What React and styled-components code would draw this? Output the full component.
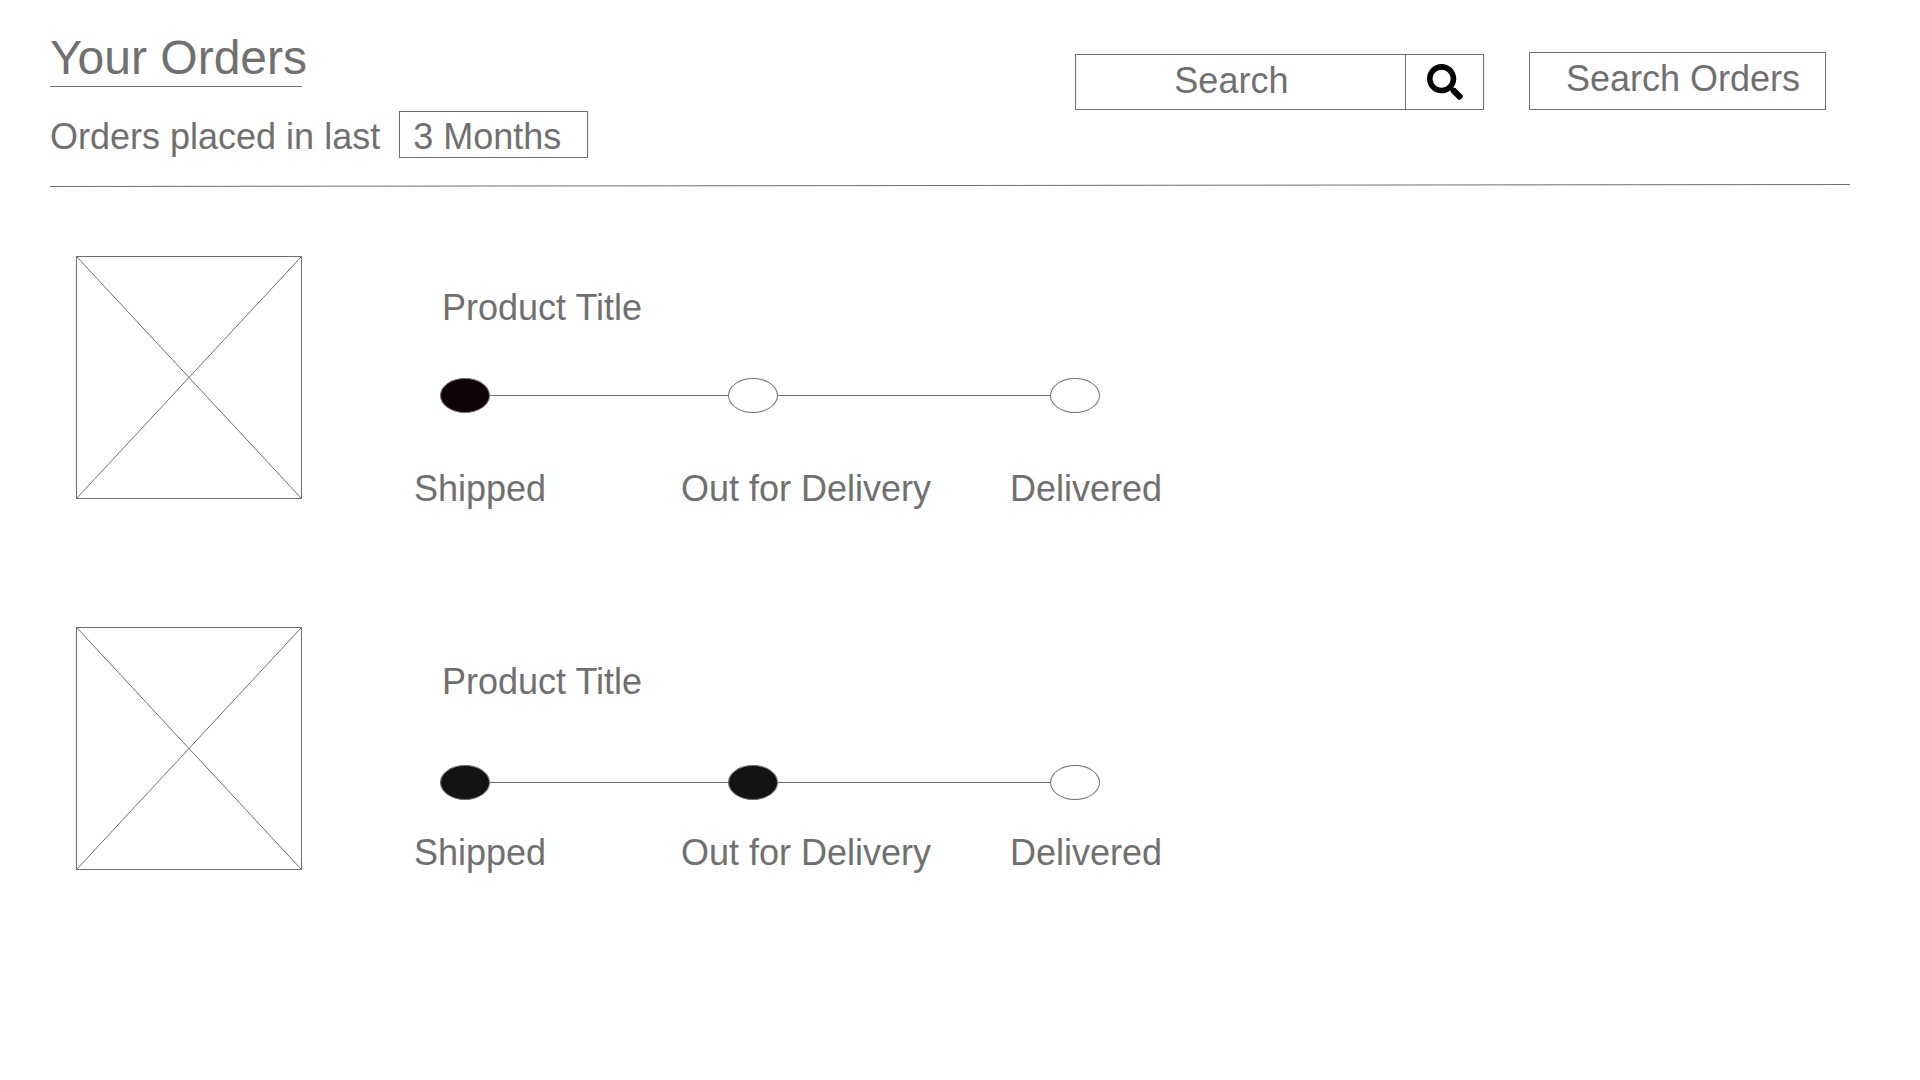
import React from "react";
import styled, { createGlobalStyle } from "styled-components";
import { FaSearch } from "react-icons/fa";

const GlobalStyle = createGlobalStyle`
  *, *::before, *::after { box-sizing: border-box; }
  body {
    margin: 0;
    background: #fff;
    color: #707070;
    font: 36px/40px "Liberation Sans", Arial, sans-serif;
  }
  input, select, button { font: inherit; color: inherit; }
`;

const Page = styled.div`
  padding: 30px 70px 30px 50px;
`;

const Header = styled.header`
  display: flex;
  justify-content: space-between;
  align-items: flex-start;
  padding-right: 24px;
`;

const PageTitle = styled.h1`
  width: 252px;
  margin: 0 0 24px;
  border-bottom: 1px solid #707070;
  font-size: 48px;
  font-weight: 400;
  line-height: 56px;
  white-space: nowrap;
`;

const Filter = styled.div`
  display: flex;
  align-items: baseline;
  gap: 19px;
  white-space: nowrap;
`;

const PeriodSelect = styled.select`
  appearance: none;
  width: 189px;
  height: 47px;
  padding: 4px 13px 0;
  border: 1px solid #707070;
  border-radius: 0;
  background: #fff;
`;

const Actions = styled.div`
  display: flex;
  align-items: flex-end;
  gap: 45px;
  padding-top: 22px;
`;

const SearchBox = styled.form`
  display: flex;
  width: 409px;
  height: 56px;
  border: 1px solid #707070;
`;

const SearchInput = styled.input`
  flex: 1;
  min-width: 0;
  padding: 0 18px 2px 0;
  border: 0;
  background: none;
  text-align: center;
  &::placeholder { color: #707070; opacity: 1; }
`;

const IconButton = styled.button`
  display: flex;
  align-items: center;
  justify-content: center;
  width: 78px;
  padding: 0 0 0 2px;
  border: 0;
  border-left: 1px solid #707070;
  background: none;
  color: #000;
`;

const OrdersButton = styled.button`
  height: 58px;
  padding: 0 25px 4px 36px;
  border: 1px solid #707070;
  background: none;
  white-space: nowrap;
`;

const Divider = styled.svg`
  display: block;
  width: 100%;
  height: 3px;
  margin: 26px 0 69px;
`;

const OrderList = styled.main`
  display: flex;
  flex-direction: column;
  gap: 118px;
  padding-left: 26px;
`;

const Order = styled.article`
  display: flex;
  gap: 112px;
`;

const Picture = styled.svg`
  flex: none;
  width: 226px;
  height: 243px;
  border: 1px solid #707070;
`;

const Details = styled.div`
  padding-top: ${(p) => (p.$compact ? 35 : 32)}px;
`;

const ProductTitle = styled.h2`
  margin: 0;
  padding-left: 28px;
  font-size: 36px;
  font-weight: 400;
  line-height: 40px;
`;

const Track = styled.div`
  display: grid;
  grid-template-columns: 50px 238px 50px 272px 50px;
  align-items: center;
  padding-left: 26px;
  margin: ${(p) => (p.$compact ? "63px 0 33px" : "50px 0 56px")};
`;

const Dot = styled.span`
  height: 35px;
  border: 1px solid #707070;
  border-radius: 50%;
  background: ${(p) => p.$fill};
`;

const Connector = styled.span`
  height: 1px;
  background: #707070;
`;

const Steps = styled.ol`
  display: grid;
  grid-template-columns: 267px 329px auto;
  margin: 0;
  padding: 0;
  list-style: none;
  white-space: nowrap;
`;

const STEPS = ["Shipped", "Out for Delivery", "Delivered"];

const ORDERS = [
  { id: 1, title: "Product Title", reached: 1, fill: "#0d0405", compact: false },
  { id: 2, title: "Product Title", reached: 2, fill: "#151312", compact: true },
];

function OrderCard({ order }) {
  return (
    <Order>
      <Picture role="img" aria-label={order.title}>
        <line x1="0" y1="0" x2="100%" y2="100%" stroke="#707070" />
        <line x1="100%" y1="0" x2="0" y2="100%" stroke="#707070" />
      </Picture>
      <Details $compact={order.compact}>
        <ProductTitle>{order.title}</ProductTitle>
        <Track $compact={order.compact} aria-hidden="true">
          {STEPS.map((step, i) => (
            <React.Fragment key={step}>
              {i > 0 && <Connector />}
              <Dot $fill={i < order.reached ? order.fill : "#fff"} />
            </React.Fragment>
          ))}
        </Track>
        <Steps>
          {STEPS.map((step, i) => (
            <li key={step} aria-current={i === order.reached - 1 ? "step" : undefined}>
              {step}
            </li>
          ))}
        </Steps>
      </Details>
    </Order>
  );
}

export default function App() {
  return (
    <>
      <GlobalStyle />
      <Page>
        <Header>
          <div>
            <PageTitle>Your Orders</PageTitle>
            <Filter>
              <label htmlFor="period">Orders placed in last</label>
              <PeriodSelect id="period">
                <option>3 Months</option>
              </PeriodSelect>
            </Filter>
          </div>
          <Actions>
            <SearchBox role="search" onSubmit={(e) => e.preventDefault()}>
              <SearchInput type="text" placeholder="Search" aria-label="Search" />
              <IconButton type="submit" aria-label="Submit search">
                <FaSearch size={36} />
              </IconButton>
            </SearchBox>
            <OrdersButton type="button">Search Orders</OrdersButton>
          </Actions>
        </Header>
        <Divider viewBox="0 0 1800 3" preserveAspectRatio="none" aria-hidden="true">
          <line x1="0" y1="2.5" x2="1800" y2="0.5" stroke="#707070" />
        </Divider>
        <OrderList>
          {ORDERS.map((order) => (
            <OrderCard key={order.id} order={order} />
          ))}
        </OrderList>
      </Page>
    </>
  );
}
